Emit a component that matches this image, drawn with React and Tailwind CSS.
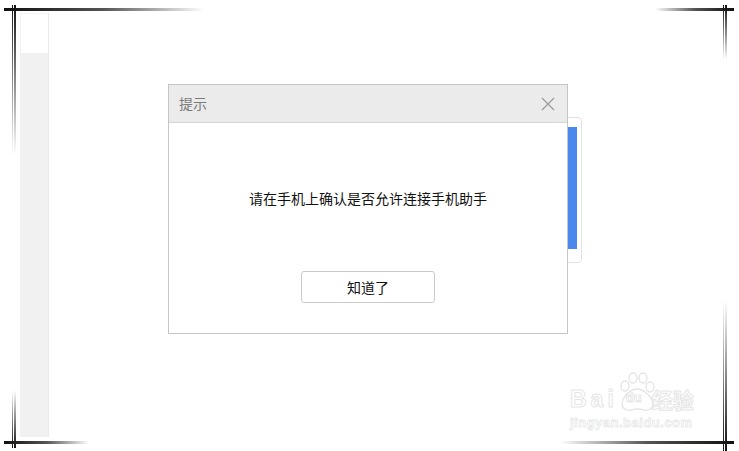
import React from "react";

function Paw() {
  return (
    <svg width="42" height="40" viewBox="0 0 42 40" fill="none" stroke="#e4e4e4" strokeWidth="1.3">
      <ellipse cx="9" cy="14" rx="4" ry="5" />
      <ellipse cx="17" cy="6" rx="4" ry="5" />
      <ellipse cx="27" cy="6" rx="4" ry="5" />
      <ellipse cx="34" cy="15" rx="4" ry="5" />
      <path d="M21 17c-7 0-15 9-15 15 0 5 5 7 9 6 3-1 4-1 6-1s4 0 7 1c4 1 9-1 9-6 0-6-9-15-16-15z" />
    </svg>
  );
}

export default function App() {
  return (
    <div className="relative w-[739px] h-[451px] overflow-hidden bg-white font-['Noto_Sans_CJK_SC','Noto_Sans',sans-serif]">
      {/* page behind the dialog */}
      <div className="flex h-full pl-[20px] pt-[13px] pb-[14px]">
        <div className="w-[29px] flex flex-col border-r border-[#ebebeb]">
          <div className="h-[40px] border-t border-l border-[#f3f3f3]"></div>
          <div className="flex-1 bg-[#f1f1f1]"></div>
        </div>
        <div className="flex-1 flex justify-end pr-[157px]">
          <div className="mt-[104px] w-[180px] h-[146px] border border-[#e2e2e2] rounded-r-[4px] pt-[9px] pr-[4px] flex justify-end">
            <div className="w-[11px] h-[122px] bg-[#4a88ee]"></div>
          </div>
        </div>
      </div>

      {/* dialog */}
      <div className="absolute left-[168px] top-[84px] w-[400px] h-[250px] border border-[#c6c6c6] bg-white flex flex-col">
        <div className="h-[38px] shrink-0 bg-[#ebebeb] border-b border-[#d6d6d6] flex items-center justify-between pl-[10px] pr-[12px]">
          <span className="text-[14px] text-[#7a7a7a]">提示</span>
          <svg width="14" height="14" viewBox="0 0 14 14" stroke="#9a9a9a" strokeWidth="1.2">
            <path d="M1 1L13 13M13 1L1 13" />
          </svg>
        </div>
        <div className="flex-1 flex flex-col items-center pt-[65px]">
          <p className="text-[14px] leading-[20px] text-[#111]">请在手机上确认是否允许连接手机助手</p>
          <button className="mt-[63px] w-[134px] h-[32px] border border-[#c9c9c9] rounded-[3px] bg-white text-[14px] text-[#111]">
            知道了
          </button>
        </div>
      </div>

      {/* watermark */}
      <div className="absolute left-[570px] top-[372px] flex flex-col">
        <div className="flex items-end">
          <span className="mb-[1px] text-[23px] leading-[24px] tracking-[4px] font-bold text-white [-webkit-text-stroke:1px_#e6e6e6] font-['Liberation_Sans',sans-serif]">Bai</span>
          <div className="relative -ml-[2px]">
            <Paw />
            <span className="absolute left-[10px] top-[19px] text-[13px] leading-[14px] font-bold text-white [-webkit-text-stroke:0.8px_#e4e4e4] font-['Liberation_Sans',sans-serif]">du</span>
          </div>
          <span className="-ml-[6px] mb-[1px] text-[21px] leading-[24px] font-bold text-white [-webkit-text-stroke:1px_#e6e6e6]">经验</span>
        </div>
        <span className="mt-[4px] text-[13px] leading-[14px] tracking-[0.5px] font-bold text-white [-webkit-text-stroke:0.8px_#e8e8e8] font-['Liberation_Sans',sans-serif]">jingyan.baidu.com</span>
      </div>

      {/* corner marks */}
      <div className="absolute inset-0 pointer-events-none flex flex-col justify-between pt-[5px] pb-[7px] pl-[4px] pr-[5px]">
        <div className="flex justify-between items-start">
          <div className="w-[200px] flex flex-col">
            <div className="mt-[3px] h-[3px] bg-gradient-to-r from-[#111] via-[#555] to-transparent"></div>
            <div className="-mt-[6px] pl-[8px] flex gap-[1px]">
              <div className="w-[1px] h-[150px] bg-gradient-to-b from-[#111] to-transparent"></div>
              <div className="w-[2px] h-[150px] bg-gradient-to-b from-[#111] to-transparent"></div>
            </div>
          </div>
          <div className="w-[79px] flex flex-col">
            <div className="mt-[3px] h-[3px] bg-gradient-to-r from-transparent via-[#555] to-[#111]"></div>
            <div className="-mt-[6px] pr-[7px] flex justify-end gap-[1px]">
              <div className="w-[1px] h-[55px] bg-gradient-to-b from-[#111] to-transparent"></div>
              <div className="w-[2px] h-[55px] bg-gradient-to-b from-[#111] to-transparent"></div>
            </div>
          </div>
        </div>
        <div className="flex justify-between items-end">
          <div className="w-[85px] flex flex-col">
            <div className="pl-[8px] flex gap-[1px]">
              <div className="w-[1px] h-[58px] bg-gradient-to-t from-[#111] to-transparent"></div>
              <div className="w-[2px] h-[58px] bg-gradient-to-t from-[#111] to-transparent"></div>
            </div>
            <div className="-mt-[7px] h-[3px] bg-gradient-to-r from-[#111] via-[#555] to-transparent"></div>
          </div>
          <div className="w-[174px] flex flex-col">
            <div className="pr-[7px] flex justify-end gap-[1px]">
              <div className="w-[1px] h-[151px] bg-gradient-to-t from-[#111] to-transparent"></div>
              <div className="w-[2px] h-[151px] bg-gradient-to-t from-[#111] to-transparent"></div>
            </div>
            <div className="-mt-[10px] h-[3px] bg-gradient-to-r from-transparent via-[#555] to-[#111]"></div>
          </div>
        </div>
      </div>
    </div>
  );
}
